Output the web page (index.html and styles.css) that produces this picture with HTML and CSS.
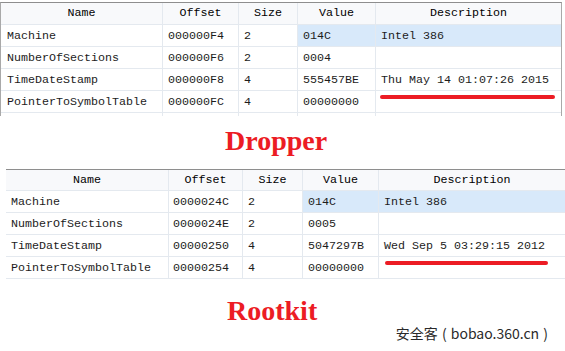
FILE: index.html
```html
<!DOCTYPE html>
<html>
<head>
<meta charset="utf-8">
<link rel="stylesheet" href="styles.css">
</head>
<body>
<div class="table table-top">
  <div class="grid grid-top">
    <div class="cell head">Name</div>
    <div class="cell head">Offset</div>
    <div class="cell head">Size</div>
    <div class="cell head">Value</div>
    <div class="cell head last">Description</div>

    <div class="cell first">Machine</div>
    <div class="cell">000000F4</div>
    <div class="cell">2</div>
    <div class="cell sel">014C</div>
    <div class="cell sel last">Intel 386</div>

    <div class="cell first">NumberOfSections</div>
    <div class="cell">000000F6</div>
    <div class="cell">2</div>
    <div class="cell">0004</div>
    <div class="cell last"></div>

    <div class="cell first">TimeDateStamp</div>
    <div class="cell">000000F8</div>
    <div class="cell">4</div>
    <div class="cell">555457BE</div>
    <div class="cell last">Thu May 14 01:07:26 2015</div>

    <div class="cell first">PointerToSymbolTable</div>
    <div class="cell">000000FC</div>
    <div class="cell">4</div>
    <div class="cell">00000000</div>
    <div class="cell last"></div>

    <div class="cell first"></div>
    <div class="cell"></div>
    <div class="cell"></div>
    <div class="cell"></div>
    <div class="cell last"></div>
  </div>
  <div class="mark mark-top"></div>
</div>

<div class="title title-dropper">Dropper</div>

<div class="table table-bottom">
  <div class="grid grid-bottom">
    <div class="cell head">Name</div>
    <div class="cell head">Offset</div>
    <div class="cell head">Size</div>
    <div class="cell head">Value</div>
    <div class="cell head last">Description</div>

    <div class="cell first">Machine</div>
    <div class="cell off">0000024C</div>
    <div class="cell">2</div>
    <div class="cell sel">014C</div>
    <div class="cell sel last">Intel 386</div>

    <div class="cell first">NumberOfSections</div>
    <div class="cell off">0000024E</div>
    <div class="cell">2</div>
    <div class="cell">0005</div>
    <div class="cell last"></div>

    <div class="cell first">TimeDateStamp</div>
    <div class="cell off">00000250</div>
    <div class="cell">4</div>
    <div class="cell">5047297B</div>
    <div class="cell last">Wed Sep 5 03:29:15 2012</div>

    <div class="cell first">PointerToSymbolTable</div>
    <div class="cell off">00000254</div>
    <div class="cell">4</div>
    <div class="cell">00000000</div>
    <div class="cell last"></div>
  </div>
  <div class="mark mark-bottom"></div>
</div>

<div class="title title-rootkit">Rootkit</div>
<div class="watermark">安全客 ( bobao.360.cn )</div>
</body>
</html>
```

FILE: styles.css
```css
html, body {
  margin: 0;
  padding: 0;
  background: #ffffff;
}

body {
  width: 565px;
  height: 351px;
  overflow: hidden;
}

.table {
  position: relative;
  font-family: "Courier New", "Nimbus Mono PS", "Nimbus Mono L", "FreeMono", "Liberation Mono", monospace;
  font-size: 11.67px;
  color: #1c1c1c;
}

.table-top {
  margin-top: 2px;
  width: 562px;
  box-sizing: border-box;
  height: 114px;
  overflow: hidden;
  border-top: 1px solid #8e8e8e;
  border-left: 1px solid #a9a9a9;
  border-right: 1px solid #a9a9a9;
}

.table-bottom {
  margin-top: 12px;
  margin-left: 6px;
  border-top: 1px solid #8e8e8e;
}

.grid {
  display: grid;
}

.grid-top {
  grid-template-columns: 162px 76px 59px 78px 1fr;
}

.grid-bottom {
  grid-template-columns: 163px 74px 60px 76px 1fr;
}

.cell {
  box-sizing: border-box;
  height: 22px;
  line-height: 21px;
  padding-top: 1px;
  padding-left: 5px;
  white-space: nowrap;
  border-right: 1px solid #e4e9ef;
  border-bottom: 1px solid #e4e9ef;
}

.cell.last {
  border-right: none;
}

.cell.first {
  padding-left: 6px;
}

.grid-bottom .cell.first {
  padding-left: 5px;
}

.cell.off {
  padding-left: 4px;
}

.head {
  background: #f8f9fb;
  color: #000000;
  text-align: center;
  padding-left: 0;
  padding-top: 0;
}

.grid-bottom .head {
  height: 21px;
  line-height: 20px;
}

.sel {
  background: #d8e9fa;
}

.mark {
  position: absolute;
  height: 4px;
  border-radius: 2px;
  background: #ec1c24;
}

.mark-top {
  left: 379px;
  top: 92px;
  width: 175px;
}

.mark-bottom {
  left: 379px;
  top: 91px;
  width: 163px;
}

.title {
  font-family: "Liberation Serif", "Times New Roman", serif;
  font-weight: bold;
  font-size: 28px;
  color: #ec1c24;
}

.title-dropper {
  margin-top: 9px;
  line-height: 32px;
  padding-left: 225px;
}

.title-rootkit {
  margin-top: 17px;
  line-height: 30px;
  padding-left: 227px;
}

.watermark {
  font-family: "Noto Sans CJK SC", "Noto Sans", sans-serif;
  font-size: 14px;
  line-height: 14px;
  color: #2a2a2a;
  text-align: right;
  padding-right: 17px;
  word-spacing: 1px;
}
```
